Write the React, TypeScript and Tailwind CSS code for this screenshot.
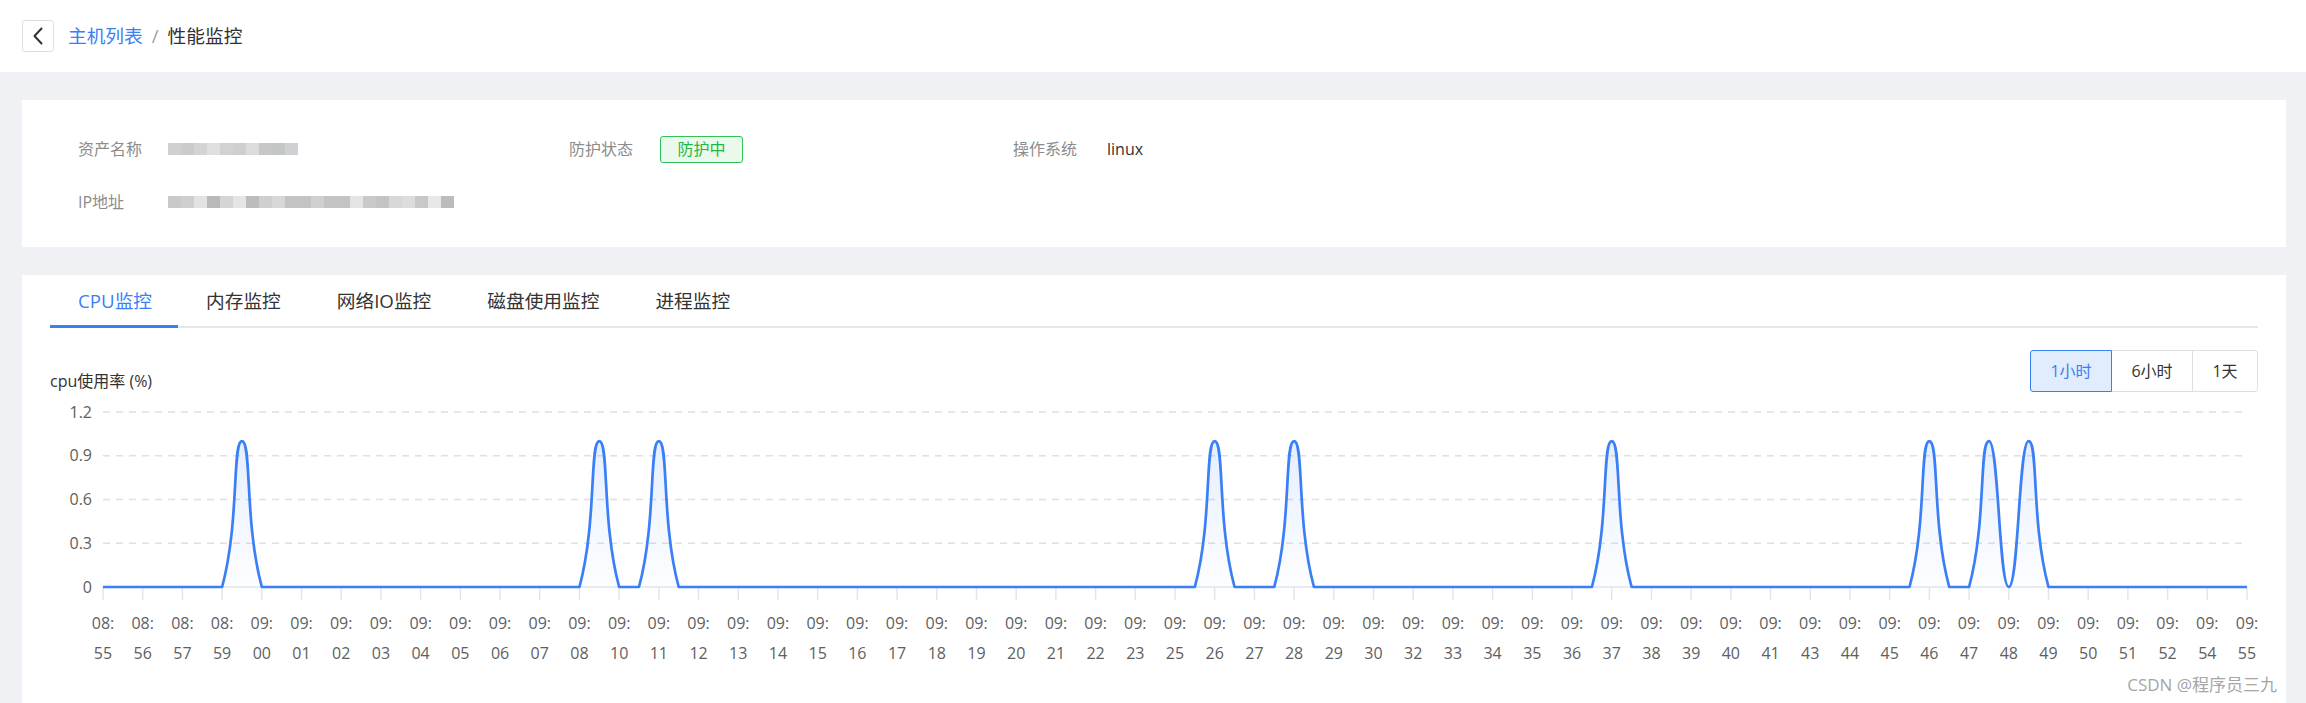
import * as React from "react";

const BLUE = "#3a7ff6";

// x-axis labels (one per tick, two data points per tick)
const TIMES =
  "08:55 08:56 08:57 08:59 09:00 09:01 09:02 09:03 09:04 09:05 09:06 09:07 09:08 09:10 09:11 09:12 09:13 09:14 09:15 09:16 09:17 09:18 09:19 09:20 09:21 09:22 09:23 09:25 09:26 09:27 09:28 09:29 09:30 09:32 09:33 09:34 09:35 09:36 09:37 09:38 09:39 09:40 09:41 09:43 09:44 09:45 09:46 09:47 09:48 09:49 09:50 09:51 09:52 09:54 09:55".split(
    " "
  );
const PEAKS = [7, 25, 28, 56, 60, 76, 92, 95, 97];
const DATA = Array.from({ length: (TIMES.length - 1) * 2 + 1 }, (_, i) =>
  PEAKS.includes(i) ? 1 : 0
);

// chart geometry, in svg coordinates (svg sits at page x 22, y 392)
const X0 = 81;
const X1 = 2225;
const Y_TOP = 20;
const Y_BASE = 195;
const MAX = 1.2;

const px = (i: number) => X0 + (i * (X1 - X0)) / (DATA.length - 1);
const py = (v: number) => Y_BASE - (v / MAX) * (Y_BASE - Y_TOP);

type Pt = { x: number; y: number };

// echarts-like smooth line, control points clamped to the bounding box
function smoothPath(pts: Pt[]) {
  const s = 0.5;
  const minY = Math.min(...pts.map((p) => p.y));
  const maxY = Math.max(...pts.map((p) => p.y));
  const clampY = (y: number) => Math.min(maxY, Math.max(minY, y));
  const cpPrev: Pt[] = [];
  const cpNext: Pt[] = [];
  pts.forEach((p, i) => {
    if (i === 0 || i === pts.length - 1) {
      cpPrev.push(p);
      cpNext.push(p);
      return;
    }
    const a = pts[i - 1];
    const b = pts[i + 1];
    const vx = b.x - a.x;
    const vy = b.y - a.y;
    const d0 = Math.hypot(p.x - a.x, p.y - a.y);
    const d1 = Math.hypot(b.x - p.x, b.y - p.y);
    const sum = d0 + d1 || 1;
    cpPrev.push({ x: p.x - vx * s * (d0 / sum), y: clampY(p.y - vy * s * (d0 / sum)) });
    cpNext.push({ x: p.x + vx * s * (d1 / sum), y: clampY(p.y + vy * s * (d1 / sum)) });
  });
  let d = `M${pts[0].x},${pts[0].y}`;
  for (let i = 1; i < pts.length; i++) {
    const c1 = cpNext[i - 1];
    const c2 = cpPrev[i];
    d += ` C${c1.x.toFixed(2)},${c1.y.toFixed(2)} ${c2.x.toFixed(2)},${c2.y.toFixed(2)} ${pts[i].x.toFixed(2)},${pts[i].y.toFixed(2)}`;
  }
  return d;
}

const CpuChart: React.FC = () => {
  const pts = DATA.map((v, i) => ({ x: px(i), y: py(v) }));
  const line = smoothPath(pts);
  const area = `${line} L${X1},${Y_BASE} L${X0},${Y_BASE} Z`;
  const font = "'Open Sans','Noto Sans CJK SC',sans-serif";

  return (
    <svg width={2264} height={311} className="block">
      <defs>
        <linearGradient id="cpuFill" x1="0" y1="0" x2="0" y2="1">
          <stop offset="0%" stopColor={BLUE} stopOpacity={0.13} />
          <stop offset="100%" stopColor={BLUE} stopOpacity={0.01} />
        </linearGradient>
      </defs>

      {/* grid */}
      {[1.2, 0.9, 0.6, 0.3].map((v) => (
        <line
          key={v}
          x1={X0}
          x2={X1}
          y1={py(v)}
          y2={py(v)}
          stroke="#e0e0e0"
          strokeWidth={1.5}
          strokeDasharray="7 6"
        />
      ))}
      {[1.2, 0.9, 0.6, 0.3, 0].map((v) => (
        <text
          key={v}
          x={70}
          y={py(v) + 5.5}
          textAnchor="end"
          fontSize={16}
          fill="#606060"
          fontFamily={font}
        >
          {v === 0 ? "0" : v.toFixed(1)}
        </text>
      ))}

      {/* x axis */}
      <line x1={X0} x2={X1} y1={Y_BASE} y2={Y_BASE} stroke="#e0e6f1" strokeWidth={1.5} />
      {TIMES.map((t, k) => {
        const x = X0 + (k * (X1 - X0)) / (TIMES.length - 1);
        const [h, m] = t.split(":");
        return (
          <g key={t + k}>
            <line x1={x} x2={x} y1={Y_BASE} y2={Y_BASE + 13} stroke="#e0e6f1" strokeWidth={1.5} />
            <text x={x} y={237} textAnchor="middle" fontSize={16} fill="#606060" fontFamily={font}>
              {h + ":"}
            </text>
            <text x={x} y={267} textAnchor="middle" fontSize={16} fill="#606060" fontFamily={font}>
              {m}
            </text>
          </g>
        );
      })}

      <path d={area} fill="url(#cpuFill)" />
      <path d={line} fill="none" stroke={BLUE} strokeWidth={2.7} strokeLinejoin="round" />
    </svg>
  );
};

const ROW1 = [
  "bg-[#d0d0d0]",
  "bg-[#cbcbcb]",
  "bg-[#d4d4d4]",
  "bg-[#e0e0e0]",
  "bg-[#d2d2d4]",
  "bg-[#cfcfcf]",
  "bg-[#dcdcdc]",
  "bg-[#c8c6c8]",
  "bg-[#c2c6c4]",
  "bg-[#d0d0d4]",
];
const ROW2 = [
  "bg-[#c9c9c9]",
  "bg-[#cfcfcf]",
  "bg-[#e3e3e3]",
  "bg-[#b9b9b9]",
  "bg-[#d5d5d5]",
  "bg-[#e5e5e5]",
  "bg-[#bcbcbc]",
  "bg-[#cdcfd1]",
  "bg-[#d7d7d7]",
  "bg-[#c3c3c3]",
  "bg-[#c3c3c3]",
  "bg-[#d0d0d0]",
  "bg-[#c5c3c3]",
  "bg-[#c3c3c3]",
  "bg-[#e5e5e5]",
  "bg-[#c9c9c9]",
  "bg-[#c3c3c3]",
  "bg-[#d7d7d7]",
  "bg-[#dcdcdc]",
  "bg-[#c8c8c8]",
  "bg-[#e8e8e8]",
  "bg-[#bcbcbc]",
];

// blurred / masked value
const Masked: React.FC<{ cells: string[] }> = ({ cells }) => (
  <div className="flex">
    {cells.map((c, i) => (
      <div key={i} className={`h-3 w-[13px] ${c}`} />
    ))}
  </div>
);

const TABS = ["CPU监控", "内存监控", "网络IO监控", "磁盘使用监控", "进程监控"];
const RANGES = ["1小时", "6小时", "1天"];

export default function App() {
  const [tab, setTab] = React.useState(0);
  const [range, setRange] = React.useState(0);

  return (
    <div className="relative flex h-[703px] flex-col overflow-hidden bg-[#f0f1f5] font-['Open_Sans','Noto_Sans_CJK_SC',sans-serif]">
      {/* Header / breadcrumb */}
      <div className="flex h-[72px] shrink-0 items-center bg-white pl-[22px]">
        <button className="flex h-8 w-8 items-center justify-center rounded-[3px] border border-[#dcdfe6] bg-white">
          <svg width="12" height="18" viewBox="0 0 12 18" fill="none">
            <path d="M9.5 1.5 2.5 9l7 7.5" stroke="#333" strokeWidth="2" strokeLinecap="round" strokeLinejoin="round" />
          </svg>
        </button>
        <div className="ml-[14px] flex items-center text-[18.7px] leading-none">
          <span className="text-[#3a7ff6]">主机列表</span>
          <span className="mx-[9px] text-[#a0a0a0]">/</span>
          <span className="text-[#303133]">性能监控</span>
        </div>
      </div>

      <div className="flex flex-1 flex-col pl-[22px] pr-[20px] pt-[28px]">
        {/* Info card */}
        <div className="flex h-[147px] shrink-0 flex-col gap-[29px] bg-white pl-[56px] pt-[37px] text-base">
          <div className="flex h-6 items-center">
            <div className="flex w-[491px] items-center">
              <span className="w-[90px] text-[#8c8c8c]">资产名称</span>
              <Masked cells={ROW1} />
            </div>
            <div className="flex w-[444px] items-center">
              <span className="w-[91px] text-[#8c8c8c]">防护状态</span>
              <span className="flex h-[27px] w-[83px] items-center justify-center rounded-[3px] border border-[#2fc45a] bg-[#ebf8ec] text-[#1cb946]">
                防护中
              </span>
            </div>
            <div className="flex items-center">
              <span className="w-[94px] text-[#8c8c8c]">操作系统</span>
              <span className="text-[#303133]">linux</span>
            </div>
          </div>
          <div className="flex h-6 items-center">
            <span className="w-[90px] text-[#8c8c8c]">IP地址</span>
            <Masked cells={ROW2} />
          </div>
        </div>

        {/* Monitor card */}
        <div className="mt-[28px] flex flex-1 flex-col bg-white">
          <div className="mx-[28px] flex h-[53px] shrink-0 border-b-2 border-[#e4e7ed]">
            {TABS.map((t, i) => (
              <button
                key={t}
                onClick={() => setTab(i)}
                className={
                  i === tab
                    ? "-mb-[2px] flex items-center border-b-[3px] border-[#3a7ff6] pl-[28px] pr-[26px] pt-[3px] text-[18.7px] text-[#3a7ff6]"
                    : "-mb-[2px] flex items-center border-b-[3px] border-transparent px-[28px] pt-[3px] text-[18.7px] text-[#333]"
                }
              >
                {t}
              </button>
            ))}
          </div>

          <div className="mt-[22px] flex h-[42px] shrink-0 items-end justify-between px-[28px]">
            <span className="text-base leading-[22px] text-[#333]">cpu使用率 (%)</span>
            <div className="flex h-[42px] text-base">
              {RANGES.map((r, i) => (
                <button
                  key={r}
                  onClick={() => setRange(i)}
                  className={
                    (i === 0 ? "w-[82px] rounded-l-[3px] " : i === 1 ? "-ml-px w-[82px] " : "-ml-px w-[66px] rounded-r-[3px] ") +
                    (i === range
                      ? "relative z-10 border border-[#3a7ff6] bg-[#e1ecfd] text-[#3a7ff6]"
                      : "border border-[#dcdfe6] bg-white text-[#333]")
                  }
                >
                  {r}
                </button>
              ))}
            </div>
          </div>

          <CpuChart />
        </div>
      </div>

      <span className="absolute bottom-[6px] right-[29px] text-[17px] text-[#a6a6a6]">CSDN @程序员三九</span>
    </div>
  );
}
